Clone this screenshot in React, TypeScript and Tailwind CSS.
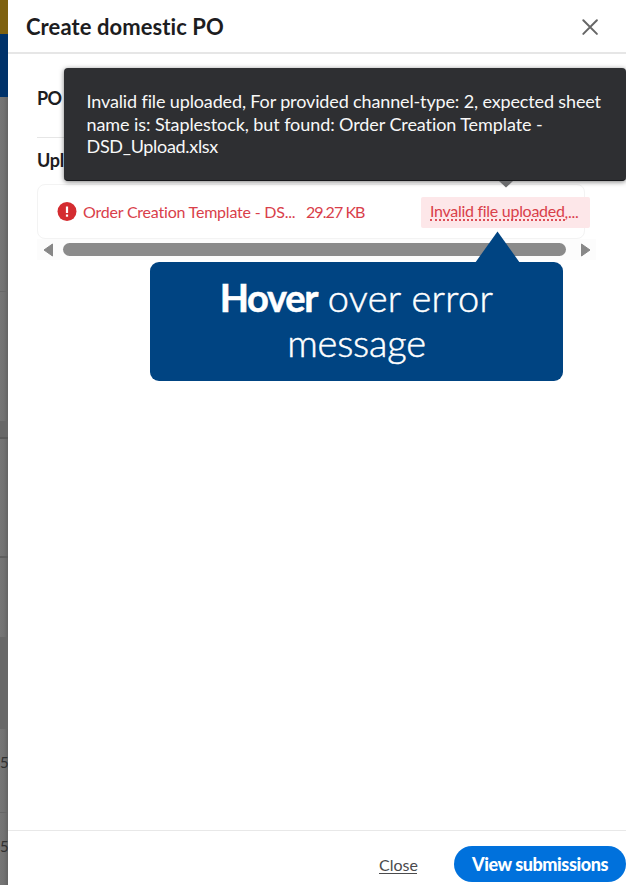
function Backdrop() {
  return (
    <aside className="flex h-full w-2 shrink-0 flex-col overflow-hidden bg-gradient-to-r from-[#767676] via-[#727272] to-[#646464] text-[15px] text-[#303030]">
      <div className="h-[34px] bg-[#7e6110]" />
      <div className="h-[63px] bg-[#00326a]" />
      <div className="h-[195px] border-b border-[#686868]" />
      <div className="h-[129px]" />
      <div className="h-[18px] border-b-2 border-[#5b5b5b] bg-[#686868]" />
      <div className="h-[119px] border-b-2 border-[#5f5f5f]" />
      <div className="h-[79px]" />
      <div className="h-[92px] bg-[#686868]" />
      <div className="flex h-[84px] items-center border-b border-[#666666] pb-[17px]">5</div>
      <div className="flex h-[72px] items-center pb-[6px]">5</div>
    </aside>
  );
}

function Tooltip() {
  return (
    <div
      role="tooltip"
      className="absolute left-14 top-[68px] h-[113px] w-[562px] whitespace-nowrap rounded-[4px] border-b border-[#17181b] bg-[#2e2f32] pl-[22.5px] pt-[22px] text-[18px] leading-[22.5px] text-[#f8f8f8] shadow-[0_1px_5px_rgba(0,0,0,0.5)]"
    >
      <div className="tracking-[-0.135px]">Invalid file uploaded, For provided channel-type: 2, expected sheet</div>
      <div className="tracking-[-0.08px]">name is: Staplestock, but found: Order Creation Template -</div>
      <div className="tracking-[-0.31px]">DSD_Upload.xlsx</div>
      <svg className="absolute left-[435px] top-[113px]" width="14" height="7" viewBox="0 0 14 7">
        <path d="M0 0h14L7 6.5z" fill="#6b6c6e" />
      </svg>
    </div>
  );
}

function Callout() {
  return (
    <div className="absolute left-[142px] top-[262px] h-[119px] w-[413px] rounded-[9px] bg-[#004482] pt-[13px] text-center text-[38px] font-light leading-[45px] text-white [-webkit-text-stroke:0.5px_white]">
      <svg className="absolute left-[325px] top-[-31px]" width="46" height="32" viewBox="0 0 46 32">
        <path d="M22.5 0.5L45 32H0z" fill="#004482" />
      </svg>
      <div className="tracking-[0.33px]">
        <b className="font-bold tracking-[-1.3px]">Hover</b> over error
      </div>
      <div className="tracking-[-0.2px]">message</div>
    </div>
  );
}

function FileRow() {
  return (
    <div className="flex h-[55px] w-[548px] items-center rounded-[8px] border border-[#f3f3f3] pl-[19px] text-[16px] text-[#d9404a]">
      <svg className="shrink-0" width="20" height="20" viewBox="0 0 20 20">
        <circle cx="10" cy="9.5" r="9.5" fill="#d42c30" />
        <rect x="8.9" y="4.5" width="2.2" height="6.5" fill="#fff" />
        <rect x="8.9" y="12.5" width="2.2" height="2.2" fill="#fff" />
      </svg>
      <span className="ml-[6px] w-[223px] shrink-0 whitespace-nowrap tracking-[-0.21px]">Order Creation Template - DS...</span>
      <span className="w-[115px] shrink-0 whitespace-nowrap tracking-[-0.93px]">29.27 KB</span>
      <span className="mt-px flex h-[31px] w-[169px] shrink-0 items-center whitespace-nowrap rounded-[2px] bg-[#fde7e9] pl-[9px] tracking-[-0.29px]">
        <span className="border-b-2 border-dotted border-[#dd5058] leading-[16px]">Invalid file uploaded</span>,...
      </span>
    </div>
  );
}

function ScrollBar() {
  return (
    <div className="flex h-[21px] w-[559px] items-center bg-[#fcfcfc] pl-[6px]">
      <svg width="11" height="14" viewBox="0 0 11 14">
        <path d="M9.5 1v12L1 7z" fill="#878787" stroke="#878787" strokeLinejoin="round" />
      </svg>
      <div className="ml-[8.5px] h-[13px] w-[503.5px] rounded-full bg-[#8a8a8a]" />
      <svg className="ml-[14px]" width="11" height="14" viewBox="0 0 11 14">
        <path d="M1.5 1v12L10 7z" fill="#878787" stroke="#878787" strokeLinejoin="round" />
      </svg>
    </div>
  );
}

export default function App() {
  return (
    <div className="flex h-[885px] w-[626px] overflow-hidden bg-white font-['Lato','Liberation_Sans',sans-serif] [font-variant-ligatures:none]">
      <Backdrop />
      <section className="relative flex min-w-0 flex-1 flex-col">
        <header className="flex h-[54px] shrink-0 items-center justify-between border-b-2 border-[#e6e6e6] pl-[18px] pr-[27px]">
          <h1 className="whitespace-nowrap text-[22px] font-bold tracking-[0.08px] text-[#1d1d1f]">Create domestic PO</h1>
          <button aria-label="Close dialog" className="pt-px">
            <svg width="18" height="18" viewBox="0 0 18 18" stroke="#666" strokeWidth="2" strokeLinecap="round">
              <path d="M2.3 2.3L15.9 15.9M15.9 2.3L2.3 15.9" />
            </svg>
          </button>
        </header>
        <main className="flex-1 pl-[29px] text-[#1d1d1f]">
          <div className="flex h-[84px] w-[548px] items-center border-b border-[#e6e6e6] pt-[5px] text-[18px] font-bold tracking-[-0.59px]">
            PO
          </div>
          <div className="flex h-[46px] items-center pb-[2px] text-[18px] font-bold tracking-[-0.3px]">Upl</div>
          <FileRow />
          <ScrollBar />
        </main>
        <footer className="flex h-[55px] shrink-0 items-start border-t border-[#e8e8e8] pl-[371px] pt-[15px]">
          <a className="mt-[8px] h-[20px] w-[38px] border-b border-[#4a4a4c] text-[16px] leading-[21px] text-[#4a4a4c]">Close</a>
          <button className="ml-[37px] h-[36px] w-[172px] shrink-0 whitespace-nowrap rounded-full bg-[#0071dc] text-[18px] font-black tracking-[-0.42px] text-white">
            View submissions
          </button>
        </footer>
        <Tooltip />
        <Callout />
      </section>
    </div>
  );
}
